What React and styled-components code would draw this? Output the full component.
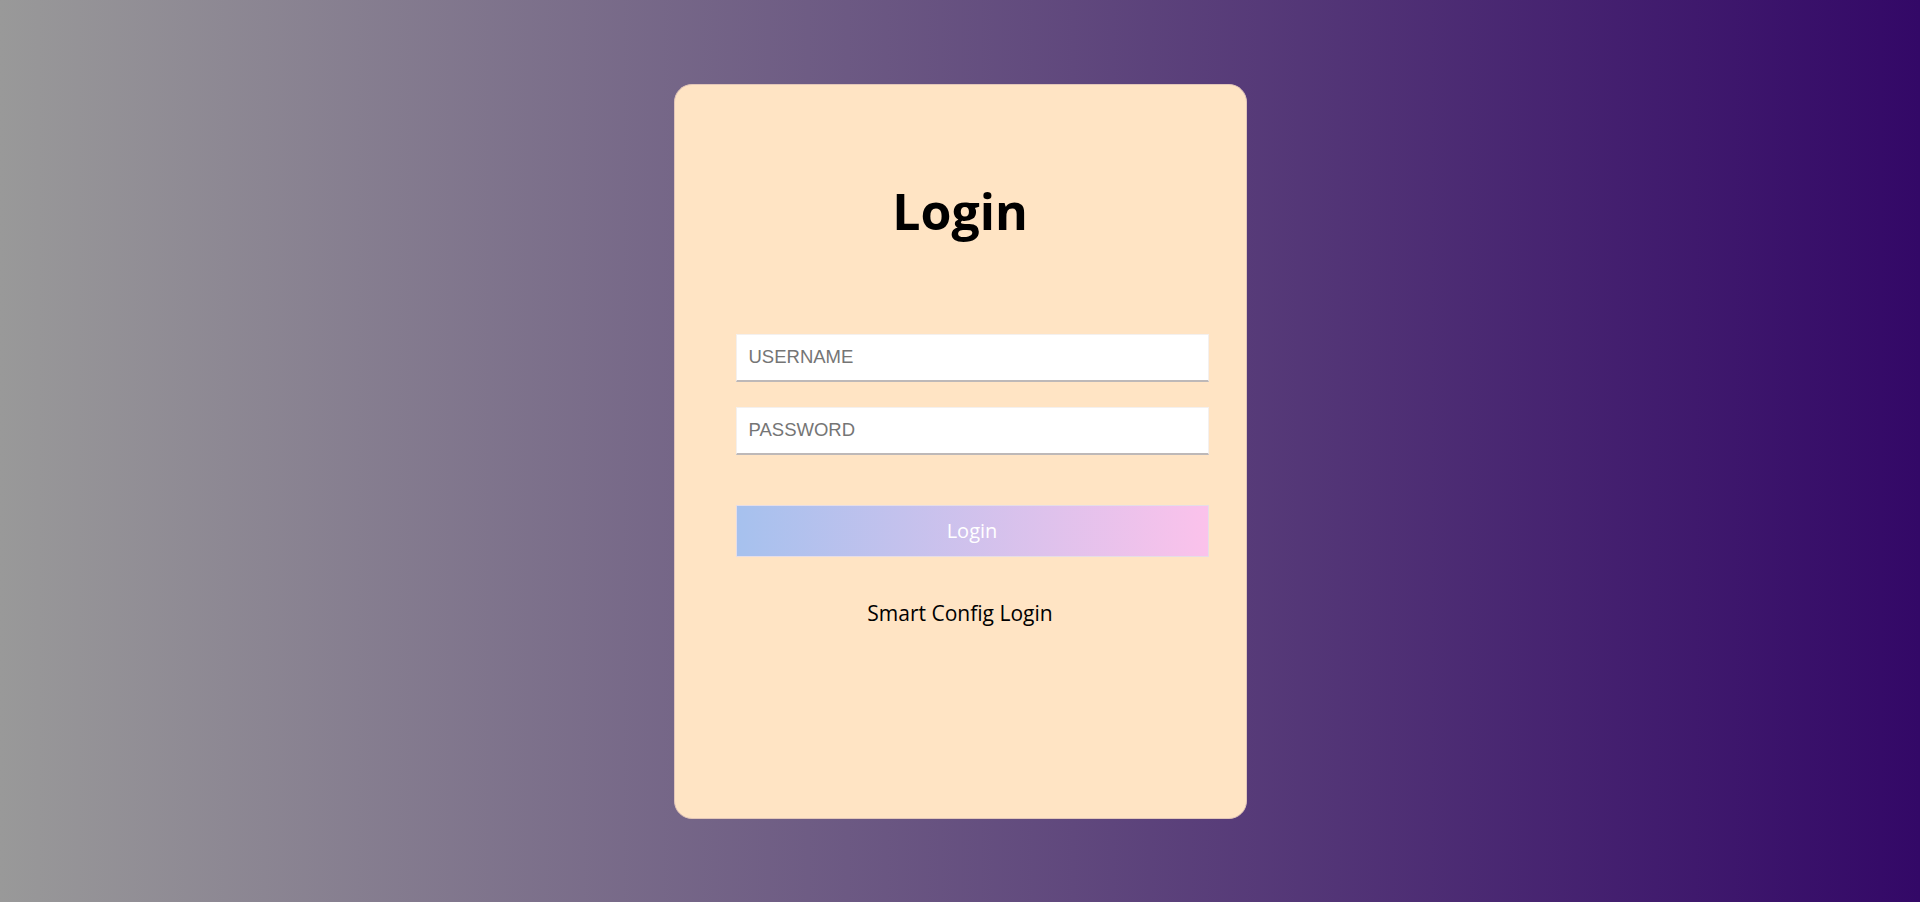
import React from "react";
import styled, { createGlobalStyle } from "styled-components";

const GlobalStyle = createGlobalStyle`
  html, body {
    margin: 0;
    padding: 0;
    height: 100%;
  }
  body {
    font-family: "Open Sans", "Noto Sans", sans-serif;
  }
`;

// Login page component
const App = () => {
  return (
    <>
      <GlobalStyle />
      <Page>
        <Card>
          <Title>Login</Title>
          <Form onSubmit={(e) => e.preventDefault()}>
            <Input type="text" placeholder="USERNAME" />
            <Input type="password" placeholder="PASSWORD" />
            <Button type="submit">Login</Button>
          </Form>
          <SmartLink>Smart Config Login</SmartLink>
        </Card>
      </Page>
    </>
  );
};

// styled components

const Page = styled.div`
  height: 100vh;
  display: flex;
  align-items: center;
  justify-content: center;
  background: linear-gradient(to right, #999999, #330867);
`;

const Card = styled.div`
  box-sizing: border-box;
  width: 573px;
  height: 735px;
  background: #ffe4c4;
  border: 1px solid #e2c6b8;
  border-radius: 18px;
  display: flex;
  flex-direction: column;
  align-items: center;
`;

const Title = styled.h1`
  margin: 92px 0 0 0;
  font-size: 50px;
  line-height: 68px;
  font-weight: 700;
  color: #000;
`;

const Form = styled.form`
  align-self: flex-start;
  margin: 89px 0 0 61px;
  width: 473px;
  display: flex;
  flex-direction: column;
`;

const Input = styled.input`
  box-sizing: border-box;
  height: 48px;
  margin-bottom: 25px;
  padding: 0 12px;
  border: 1px solid #f4f0ee;
  border-bottom: 2px solid #bdb8b8;
  background: #fff;
  font-family: "Liberation Sans", Arial, sans-serif;
  font-size: 18.5px;
  color: #333;
  outline: none;

  &::placeholder {
    color: #757575;
  }
`;

const Button = styled.button`
  box-sizing: border-box;
  height: 52px;
  margin-top: 25px;
  border: 1px solid #e6dde6;
  background: linear-gradient(to right, #a6c1ee, #fbc2eb);
  color: #fff;
  font-family: "Open Sans", "Noto Sans", sans-serif;
  font-size: 20px;
  cursor: pointer;
`;

const SmartLink = styled.div`
  margin-top: 42px;
  font-size: 21px;
  line-height: 28px;
  color: #000;
  cursor: pointer;
`;

export default App;
